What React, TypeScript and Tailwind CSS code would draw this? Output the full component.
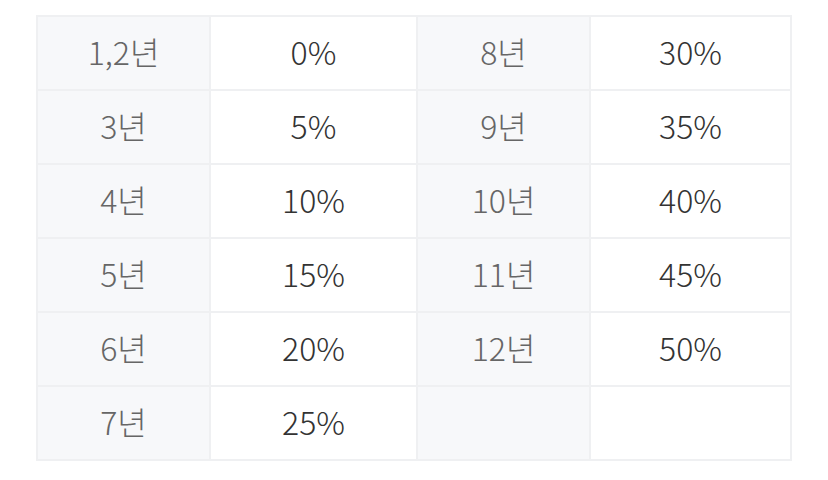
import React from "react";

const rows: [string, string, string, string][] = [
  ["1,2년", "0%", "8년", "30%"],
  ["3년", "5%", "9년", "35%"],
  ["4년", "10%", "10년", "40%"],
  ["5년", "15%", "11년", "45%"],
  ["6년", "20%", "12년", "50%"],
  ["7년", "25%", "", ""],
];

export default function App() {
  return (
    <div
      className="w-[828px] h-[480px] bg-white pt-[15px] pl-[36px]"
      style={{ fontFamily: '"Noto Sans CJK KR", "Noto Sans", sans-serif' }}
    >
      <div className="inline-grid grid-cols-[171px_205px_171px_199px] auto-rows-[72px] gap-[2px] p-[2px] bg-[#eff0f2]">
        {rows.map((r, i) => (
          <React.Fragment key={i}>
            <div className="bg-[#f7f8fa] flex items-center justify-center pb-[5px] text-[32px] font-light text-[#666666]">{r[0]}</div>
            <div className="bg-white flex items-center justify-center pb-[5px] text-[32px] font-light text-[#333333]">{r[1]}</div>
            <div className="bg-[#f7f8fa] flex items-center justify-center pb-[5px] text-[32px] font-light text-[#666666]">{r[2]}</div>
            <div className="bg-white flex items-center justify-center pb-[5px] text-[32px] font-light text-[#333333]">{r[3]}</div>
          </React.Fragment>
        ))}
      </div>
    </div>
  );
}
